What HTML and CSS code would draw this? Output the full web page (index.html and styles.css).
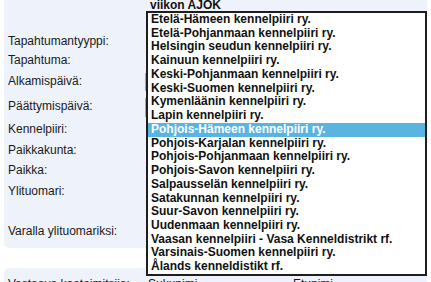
FILE: index.html
```html
<!DOCTYPE html>
<html lang="fi">
<head>
<meta charset="utf-8">
<title>Koetiedot</title>
<link rel="stylesheet" href="styles.css">
</head>
<body>
<div class="page">
  <section class="panel panel-main">
    <div class="row row-top">
      <div class="label"></div>
      <div class="field"><span class="koe-name">viikon AJOK</span></div>
    </div>
    <div class="row row-h19">
      <div class="label">Tapahtumantyyppi:</div>
      <div class="field"></div>
    </div>
    <div class="row row-h21">
      <div class="label">Tapahtuma:</div>
      <div class="field"></div>
    </div>
    <div class="row row-h25">
      <div class="label">Alkamispäivä:</div>
      <div class="field"><span class="input input-a"></span></div>
    </div>
    <div class="row row-h23">
      <div class="label">Päättymispäivä:</div>
      <div class="field"><span class="input input-b"></span></div>
    </div>
    <div class="row row-h21">
      <div class="label">Kennelpiiri:</div>
      <div class="field"></div>
    </div>
    <div class="row row-h20">
      <div class="label">Paikkakunta:</div>
      <div class="field"></div>
    </div>
    <div class="row row-h21">
      <div class="label">Paikka:</div>
      <div class="field"></div>
    </div>
    <div class="row row-h40">
      <div class="label">Ylituomari:</div>
      <div class="field"></div>
    </div>
    <div class="row row-h24">
      <div class="label">Varalla ylituomariksi:</div>
      <div class="field"></div>
    </div>

    <ul class="dropdown">
      <li class="option">Etelä-Hämeen kennelpiiri ry.</li>
      <li class="option">Etelä-Pohjanmaan kennelpiiri ry.</li>
      <li class="option">Helsingin seudun kennelpiiri ry.</li>
      <li class="option">Kainuun kennelpiiri ry.</li>
      <li class="option">Keski-Pohjanmaan kennelpiiri ry.</li>
      <li class="option">Keski-Suomen kennelpiiri ry.</li>
      <li class="option">Kymenläänin kennelpiiri ry.</li>
      <li class="option">Lapin kennelpiiri ry.</li>
      <li class="option selected">Pohjois-Hämeen kennelpiiri ry.</li>
      <li class="option">Pohjois-Karjalan kennelpiiri ry.</li>
      <li class="option">Pohjois-Pohjanmaan kennelpiiri ry.</li>
      <li class="option">Pohjois-Savon kennelpiiri ry.</li>
      <li class="option">Salpausselän kennelpiiri ry.</li>
      <li class="option">Satakunnan kennelpiiri ry.</li>
      <li class="option">Suur-Savon kennelpiiri ry.</li>
      <li class="option">Uudenmaan kennelpiiri ry.</li>
      <li class="option">Vaasan kennelpiiri - Vasa Kenneldistrikt rf.</li>
      <li class="option">Varsinais-Suomen kennelpiiri ry.</li>
      <li class="option">Ålands kenneldistikt rf.</li>
    </ul>
  </section>

  <section class="panel panel-second">
    <div class="row row-contact">
      <div class="label">Vastaava koetoimitsija:</div>
      <div class="field">Sukunimi</div>
      <div class="field">Etunimi</div>
    </div>
  </section>
</div>
</body>
</html>
```

FILE: styles.css
```css
html, body {
  margin: 0;
  padding: 0;
  background: #ffffff;
}

body {
  font-family: "Liberation Sans", Arial, sans-serif;
  font-size: 12px;
  color: #1a1a1a;
  overflow: hidden;
}

.page {
  padding: 0 4px;
}

.panel {
  background: #eef2fb;
  border-radius: 5px;
  padding: 0 4px;
  position: relative;
}

.panel-main {
  margin-top: -10px;
  padding-top: 10px;
  padding-bottom: 2px;
}

.panel-second {
  margin-top: 20px;
  padding-top: 7px;
  padding-bottom: 10px;
}

.row {
  display: grid;
  grid-template-columns: 137px 1fr;
  align-items: start;
}

.label {
  padding-top: 2px;
  line-height: 14px;
  white-space: nowrap;
}

.field {
  line-height: 14px;
}

.row-top { height: 32px; }
.row-h19 { height: 19px; }
.row-h20 { height: 20px; }
.row-h21 { height: 21px; }
.row-h23 { height: 23px; }
.row-h24 { height: 24px; }
.row-h25 { height: 25px; }
.row-h40 { height: 40px; }

.koe-name {
  display: block;
  padding-left: 5px;
  font-weight: bold;
  line-height: 11px;
  color: #111;
}

.input {
  display: block;
  width: 90px;
  background: #fff;
  border: 1px solid #a6a6a6;
  box-sizing: border-box;
  margin-top: 1px;
}

.input-a { height: 18px; }
.input-b { height: 19px; }

.row-contact {
  grid-template-columns: 137px 145px 1fr;
}

.row-contact .field {
  padding-top: 2px;
  padding-left: 3px;
}

.dropdown {
  position: absolute;
  left: 142px;
  top: 21px;
  width: 281px;
  box-sizing: border-box;
  margin: 0;
  padding: 0;
  list-style: none;
  background: #ffffff;
  border: 2px solid #1e1e1e;
  z-index: 10;
}

.option {
  height: 13.74px;
  line-height: 13.74px;
  padding-left: 3px;
  font-weight: bold;
  color: #111;
  white-space: nowrap;
}

.option.selected {
  background: #5ab4e1;
  color: #ffffff;
}
```
